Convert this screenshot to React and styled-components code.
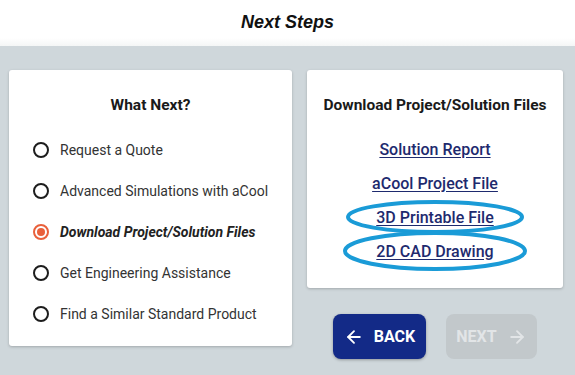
import React, { useState } from 'react';
import styled, { createGlobalStyle } from 'styled-components';
import { ArrowLeft, ArrowRight } from 'lucide-react';

const options = [
  'Request a Quote',
  'Advanced Simulations with aCool',
  'Download Project/Solution Files',
  'Get Engineering Assistance',
  'Find a Similar Standard Product',
];

const files = [
  { label: 'Solution Report' },
  { label: 'aCool Project File' },
  { label: '3D Printable File', circled: true, rx: 87, ry: 15 },
  { label: '2D CAD Drawing', circled: true, rx: 90, ry: 18 },
];

const App = () => {
  const [selected, setSelected] = useState(2);

  return (
    <>
      <GlobalStyle />
      <Page>
        <Header>
          <Title>Next Steps</Title>
        </Header>

        <Main>
          {/* Left: what next options */}
          <Card $indent>
            <CardTitle>What Next?</CardTitle>
            <OptionList>
              {options.map((opt, i) => (
                <Option key={opt} onClick={() => setSelected(i)}>
                  <Radio $checked={selected === i} />
                  <OptionText $checked={selected === i}>{opt}</OptionText>
                </Option>
              ))}
            </OptionList>
          </Card>

          {/* Right: download links + nav */}
          <RightColumn>
            <Card>
              <CardTitle>Download Project/Solution Files</CardTitle>
              <LinkList>
                {files.map((f) => (
                  <LinkRow key={f.label}>
                    <FileLink href="#">{f.label}</FileLink>
                    {f.circled && (
                      <Scribble width={f.rx * 2 + 8} height={f.ry * 2 + 8}>
                        <ellipse
                          cx={f.rx + 4}
                          cy={f.ry + 4}
                          rx={f.rx}
                          ry={f.ry}
                          fill='none'
                          stroke='#1a9bd7'
                          strokeWidth='4'
                        />
                      </Scribble>
                    )}
                  </LinkRow>
                ))}
              </LinkList>
            </Card>

            <ButtonRow>
              <NavButton $primary>
                <ArrowLeft size={20} strokeWidth={2.2} />
                BACK
              </NavButton>
              <NavButton disabled>
                NEXT
                <ArrowRight size={20} strokeWidth={2.2} />
              </NavButton>
            </ButtonRow>
          </RightColumn>
        </Main>
      </Page>
    </>
  );
};

const GlobalStyle = createGlobalStyle`
  body {
    margin: 0;
    background: #cfd7db;
    font-family: Roboto, "Liberation Sans", sans-serif;
  }
`;

const Page = styled.div`
  width: 575px;
  height: 375px;
  overflow: hidden;
  background: #cfd7db;
`;

const Header = styled.header`
  height: 46px;
  display: flex;
  align-items: center;
  justify-content: center;
  background: linear-gradient(#ffffff 0, #ffffff 38px, #f4f6f6 46px);
  box-sizing: border-box;
  padding-bottom: 2px;
`;

const Title = styled.h1`
  margin: 0;
  font-family: "Liberation Sans", Arial, sans-serif;
  font-size: 18px;
  font-weight: bold;
  font-style: italic;
  color: #111;
`;

const Main = styled.main`
  display: grid;
  grid-template-columns: 283px 256px;
  column-gap: 15px;
  align-items: start;
  padding: 24px 12px 0 9px;
`;

const Card = styled.section`
  background: #fff;
  border-radius: 3px;
  box-shadow: 0 1px 3px rgba(0, 0, 0, 0.22);
  padding: ${({ $indent }) => ($indent ? '24px 0 12px 24px' : '24px 0 20px')};
  display: flex;
  flex-direction: column;

  & > h2 {
    padding-right: ${({ $indent }) => ($indent ? '24px' : '0')};
  }
`;

const CardTitle = styled.h2`
  margin: 0;
  font-size: 15.5px;
  line-height: 22px;
  font-weight: 700;
  color: #1a1a1a;
  text-align: center;
  white-space: nowrap;
`;

const OptionList = styled.div`
  margin-top: 13px;
  display: flex;
  flex-direction: column;
`;

const Option = styled.label`
  height: 41px;
  display: flex;
  align-items: center;
  gap: 11px;
  cursor: pointer;
`;

const Radio = styled.span`
  width: 16px;
  height: 16px;
  box-sizing: border-box;
  border-radius: 50%;
  border: 2px solid ${({ $checked }) => ($checked ? '#e9603b' : '#1d1d1d')};
  display: flex;
  align-items: center;
  justify-content: center;

  &::after {
    content: '';
    width: 8px;
    height: 8px;
    border-radius: 50%;
    background: #e9603b;
    display: ${({ $checked }) => ($checked ? 'block' : 'none')};
  }
`;

const OptionText = styled.span`
  font-size: 14px;
  color: ${({ $checked }) => ($checked ? '#222' : '#333')};
  font-weight: ${({ $checked }) => ($checked ? 700 : 400)};
  font-style: ${({ $checked }) => ($checked ? 'italic' : 'normal')};
`;

const RightColumn = styled.div`
  display: flex;
  flex-direction: column;
`;

const LinkList = styled.div`
  margin-top: 16px;
  display: flex;
  flex-direction: column;
`;

const LinkRow = styled.div`
  position: relative;
  height: 34px;
  display: flex;
  align-items: center;
  justify-content: center;
`;

const FileLink = styled.a`
  font-size: 16px;
  font-weight: 500;
  color: #1e2a6e;
  text-decoration: underline;
  text-underline-offset: 2px;
`;

const Scribble = styled.svg`
  position: absolute;
  left: 50%;
  top: 50%;
  transform: translate(-50%, -50%);
  pointer-events: none;
`;

const ButtonRow = styled.div`
  margin-top: 26px;
  display: flex;
  justify-content: center;
  gap: 20px;
`;

const NavButton = styled.button`
  width: ${({ $primary }) => ($primary ? '93px' : '91px')};
  height: 45px;
  border: none;
  border-radius: 8px;
  display: flex;
  align-items: center;
  justify-content: center;
  gap: 10px;
  font-family: Roboto, "Liberation Sans", sans-serif;
  font-size: 16px;
  font-weight: 700;
  background: ${({ $primary }) => ($primary ? '#132a87' : '#c2c8cb')};
  color: ${({ $primary }) => ($primary ? '#fff' : '#e2e5e7')};
  box-shadow: ${({ $primary }) => ($primary ? '0 1px 3px rgba(0,0,0,0.3)' : 'none')};
  cursor: ${({ disabled }) => (disabled ? 'default' : 'pointer')};
`;

export default App;
